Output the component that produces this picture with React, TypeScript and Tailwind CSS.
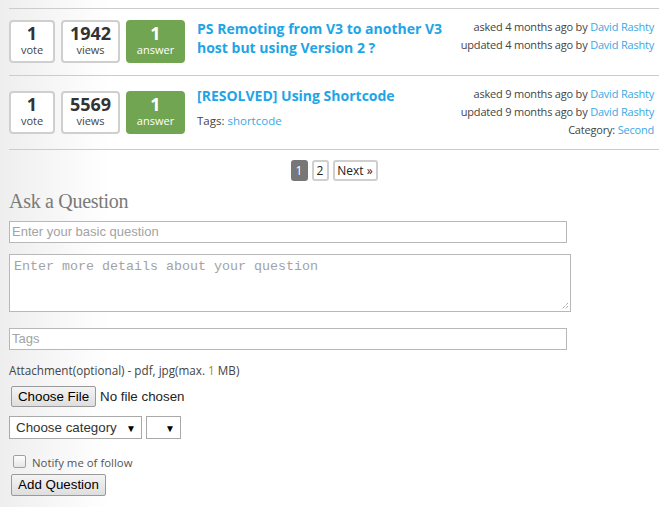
import React from "react";

const OS = "font-['Open_Sans',sans-serif]";
const AR = "font-['Liberation_Sans',Arial,sans-serif]";

function Stat({ n, label, green }: { n: string; label: string; green?: boolean }) {
  return (
    <div
      className={
        green
          ? "w-[59px] h-[43px] rounded-[4px] bg-[#72a551] text-white flex flex-col items-center"
          : "h-[43px] rounded-[4px] border-2 border-[#cfcfcf] bg-white text-[#333] flex flex-col items-center"
      }
    >
      <div className={`${green ? "mt-[3px]" : "mt-[1px]"} text-[18px] leading-[20px] font-bold`}>{n}</div>
      <div className={`text-[11px] leading-[14px] ${green ? "text-white" : "text-[#444]"}`}>{label}</div>
    </div>
  );
}

function Link({ children }: { children: React.ReactNode }) {
  return <span className="text-[#3aa8e4]">{children}</span>;
}

function Arrow() {
  return <span className="text-[10px] leading-none text-black">▼</span>;
}

export default function App() {
  return (
    <div className="min-h-[507px] w-[669px] bg-[linear-gradient(to_right,#eeeeee_0px,#ffffff_110px)] pl-[9px] pr-[10px] pt-[8px]">
      {/* Question list */}
      <div className={OS}>
        <div className="flex border-t border-[#cccccc] pt-[9px] pb-[12px]">
          <div className="flex shrink-0 gap-[6px] mt-[2px]">
            <div className="w-[46px]"><Stat n="1" label="vote" /></div>
            <div className="w-[59px]"><Stat n="1942" label="views" /></div>
            <Stat n="1" label="answer" green />
          </div>
          <div className="ml-[12px] mt-[1px] w-[260px] shrink-0 text-[14px] leading-[19px] font-bold text-[#1ea5e6]">
            PS Remoting from V3 to another V3 host but using Version 2 ?
          </div>
          <div className="ml-auto shrink-0 whitespace-nowrap pr-[5px] text-right text-[11px] leading-[18px] tracking-[-0.2px] text-[#444]">
            <div>asked 4 months ago by <Link>David Rashty</Link></div>
            <div>updated 4 months ago by <Link>David Rashty</Link></div>
          </div>
        </div>

        <div className="flex border-t border-b border-[#cccccc] pt-[9px] pb-[10px]">
          <div className="flex shrink-0 gap-[6px] mt-[6px]">
            <div className="w-[46px]"><Stat n="1" label="vote" /></div>
            <div className="w-[59px]"><Stat n="5569" label="views" /></div>
            <Stat n="1" label="answer" green />
          </div>
          <div className="ml-[12px] mt-[1px] w-[260px] shrink-0">
            <div className="text-[14px] leading-[19px] font-bold text-[#1ea5e6]">[RESOLVED] Using Shortcode</div>
            <div className="mt-[7px] text-[11.5px] leading-[18px] text-[#444]">
              Tags: <Link>shortcode</Link>
            </div>
          </div>
          <div className="ml-auto shrink-0 whitespace-nowrap pr-[5px] text-right text-[11px] leading-[18px] tracking-[-0.2px] text-[#444]">
            <div>asked 9 months ago by <Link>David Rashty</Link></div>
            <div>updated 9 months ago by <Link>David Rashty</Link></div>
            <div>Category: <Link>Second</Link></div>
          </div>
        </div>

        {/* Pagination */}
        <div className="mt-[10px] flex justify-center gap-[4px] text-[12px] leading-[17px]">
          <div className="w-[17px] h-[21px] rounded-[3px] bg-[#777777] text-white flex items-center justify-center">1</div>
          <div className="w-[17px] h-[21px] rounded-[3px] border-2 border-[#cfcfcf] bg-white text-[#222] flex items-center justify-center">2</div>
          <div className="w-[45px] h-[21px] rounded-[3px] border-2 border-[#cfcfcf] bg-white text-[#222] flex items-center justify-center">Next »</div>
        </div>
      </div>

      {/* Ask a Question */}
      <div className="mt-[8px] font-['Liberation_Serif',serif] text-[20px] leading-[24px] tracking-[-0.3px] text-[#7a7a7a]">
        Ask a Question
      </div>

      <div className={`mt-[8px] w-[558px] h-[22px] border border-[#b8b8b8] bg-white flex items-center px-[2px] ${AR} text-[13px] text-[#a3a3a3]`}>
        Enter your basic question
      </div>

      <div className="mt-[11px] w-[562px] h-[58px] border border-[#b8b8b8] bg-white relative px-[4px] pt-[4px] font-['Liberation_Mono',monospace] text-[13.33px] leading-[16px] text-[#a3a3a3]">
        Enter more details about your question
        <svg className="absolute right-[1px] bottom-[1px]" width="8" height="8" viewBox="0 0 8 8">
          <path d="M7 1 L1 7 M7 4 L4 7" stroke="#888" strokeWidth="1" strokeDasharray="1 1" />
        </svg>
      </div>

      <div className={`mt-[16px] w-[558px] h-[22px] border border-[#b8b8b8] bg-white flex items-center px-[2px] ${AR} text-[13px] text-[#a3a3a3]`}>
        Tags
      </div>

      <div className={`mt-[12px] ${OS} text-[11.7px] leading-[16px] text-[#444]`}>
        Attachment(optional) - pdf, jpg(max. <span className="text-[#c8781a]">1</span> MB)
      </div>

      <div className={`mt-[8px] flex items-center ${AR} text-[13.33px]`}>
        <div className="ml-[2px] w-[85px] h-[21px] rounded-[2px] border border-[#9a9a9a] bg-[linear-gradient(#f4f4f4,#dedede)] flex items-center justify-center text-black">
          Choose File
        </div>
        <span className="ml-[4px] text-[#222]">No file chosen</span>
      </div>

      <div className={`mt-[9px] flex gap-[4px] ${AR} text-[13.33px]`}>
        <div className="w-[133px] h-[23px] border border-[#a9a9a9] bg-white flex items-center pl-[6px] pr-[5px] text-[#333]">
          <span>Choose category</span>
          <span className="ml-auto"><Arrow /></span>
        </div>
        <div className="w-[35px] h-[23px] border border-[#a9a9a9] bg-white flex items-center pr-[5px]">
          <span className="ml-auto"><Arrow /></span>
        </div>
      </div>

      <div className={`mt-[13px] flex items-center ${OS} text-[11.4px] text-[#555]`}>
        <div className="ml-[4px] w-[13px] h-[13px] rounded-[2px] border border-[#a0a0a0] bg-[linear-gradient(#fdfdfd,#e6e6e6)]" />
        <span className="ml-[6px] mt-[2px]">Notify me of follow</span>
      </div>

      <div className={`mt-[3px] ml-[2px] w-[95px] h-[22px] rounded-[2px] border border-[#9a9a9a] bg-[linear-gradient(#f4f4f4,#dedede)] flex items-center justify-center ${AR} text-[13.33px] text-black`}>
        Add Question
      </div>
    </div>
  );
}
